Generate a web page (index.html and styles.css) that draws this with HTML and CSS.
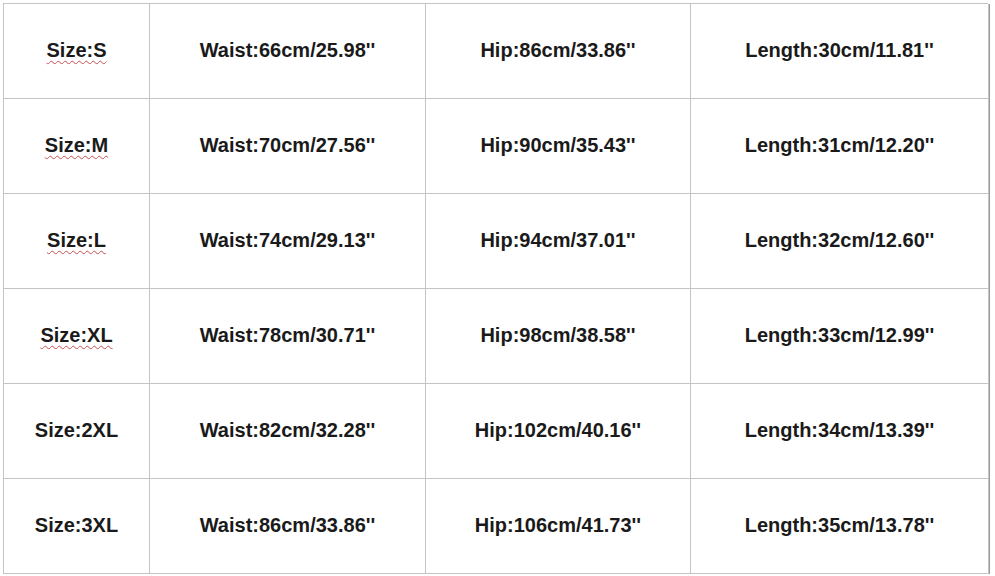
FILE: index.html
```html
<!DOCTYPE html>
<html>
<head>
<meta charset="utf-8">
<link rel="stylesheet" href="styles.css">
</head>
<body>
<div class="sheet">
  <div class="cell"><span class="spell">Size:S</span></div>
  <div class="cell">Waist:66cm/25.98''</div>
  <div class="cell">Hip:86cm/33.86''</div>
  <div class="cell">Length:30cm/11.81''</div>

  <div class="cell"><span class="spell">Size:M</span></div>
  <div class="cell">Waist:70cm/27.56''</div>
  <div class="cell">Hip:90cm/35.43''</div>
  <div class="cell">Length:31cm/12.20''</div>

  <div class="cell"><span class="spell">Size:L</span></div>
  <div class="cell">Waist:74cm/29.13''</div>
  <div class="cell">Hip:94cm/37.01''</div>
  <div class="cell">Length:32cm/12.60''</div>

  <div class="cell"><span class="spell">Size:XL</span></div>
  <div class="cell">Waist:78cm/30.71''</div>
  <div class="cell">Hip:98cm/38.58''</div>
  <div class="cell">Length:33cm/12.99''</div>

  <div class="cell">Size:2XL</div>
  <div class="cell">Waist:82cm/32.28''</div>
  <div class="cell">Hip:102cm/40.16''</div>
  <div class="cell">Length:34cm/13.39''</div>

  <div class="cell">Size:3XL</div>
  <div class="cell">Waist:86cm/33.86''</div>
  <div class="cell">Hip:106cm/41.73''</div>
  <div class="cell">Length:35cm/13.78''</div>
</div>
</body>
</html>
```
FILE: styles.css
```css
html, body {
  margin: 0;
  padding: 0;
  background: #ffffff;
}
body {
  padding: 3px 0 0 3px;
  font-family: "Liberation Sans", Arial, sans-serif;
}
.sheet {
  display: grid;
  grid-template-columns: 146px 276px 265px 298px;
  grid-template-rows: repeat(6, 95px);
  width: 985px;
  border-top: 1px solid #c4c4c4;
  border-left: 1px solid #c4c4c4;
  box-shadow: 2px 1px 0 #9a9a9a;
  box-sizing: border-box;
}
.cell {
  display: flex;
  align-items: center;
  justify-content: center;
  border-right: 1px solid #c4c4c4;
  border-bottom: 1px solid #c4c4c4;
  font-size: 20px;
  font-weight: bold;
  color: #1a1a1a;
  padding-bottom: 2px;
}
.spell {
  text-decoration: underline wavy #c85050;
  text-decoration-thickness: 1px;
  text-underline-offset: 3px;
}
```
